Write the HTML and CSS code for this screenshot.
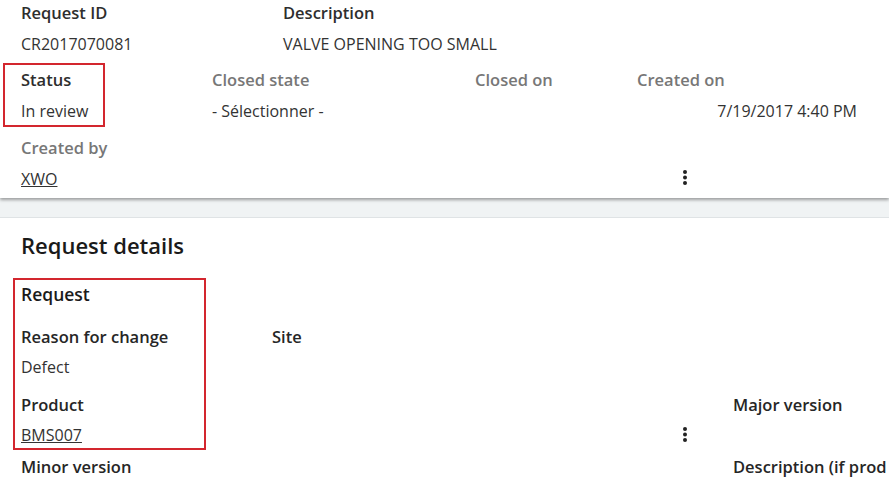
FILE: index.html
```html
<!DOCTYPE html>
<html lang="en">
<head>
    <meta charset="UTF-8">
    <meta name="viewport" content="width=device-width, initial-scale=1.0">
    <title>Change request</title>
    <link rel="stylesheet" href="styles.css">
</head>
<body>
<div class="page">

    <!-- En-tête de la demande -->
    <div class="summary">
        <div class="row row-top">
            <div class="field">
                <div class="label">Request ID</div>
                <div class="value">CR2017070081</div>
            </div>
            <div class="field">
                <div class="label">Description</div>
                <div class="value">VALVE OPENING TOO SMALL</div>
            </div>
        </div>

        <div class="row row-status">
            <div class="field">
                <div class="label">Status</div>
                <div class="value">In review</div>
            </div>
            <div class="field">
                <div class="label muted">Closed state</div>
                <div class="value">- Sélectionner -</div>
            </div>
            <div class="field">
                <div class="label muted">Closed on</div>
                <div class="value"></div>
            </div>
            <div class="field">
                <div class="label muted">Created on</div>
                <div class="value right">7/19/2017 4:40 PM</div>
            </div>
        </div>

        <div class="row row-created">
            <div class="field">
                <div class="label muted">Created by</div>
                <div class="value"><a href="#">XWO</a></div>
            </div>
            <div class="kebab">
                <svg width="4" height="15" viewBox="0 0 4 15"><circle cx="2" cy="2" r="2"/><circle cx="2" cy="7.5" r="2"/><circle cx="2" cy="13" r="2"/></svg>
            </div>
        </div>

        <div class="highlight hl-status"></div>
    </div>

    <div class="band"></div>

    <!-- Détails -->
    <div class="details">
        <h2>Request details</h2>
        <h3>Request</h3>

        <div class="row row-reason">
            <div class="field">
                <div class="label dark">Reason for change</div>
                <div class="value">Defect</div>
            </div>
            <div class="field">
                <div class="label dark">Site</div>
                <div class="value"></div>
            </div>
        </div>

        <div class="row row-product">
            <div class="field">
                <div class="label dark">Product</div>
                <div class="value"><a href="#">BMS007</a></div>
            </div>
            <div class="kebab">
                <svg width="4" height="15" viewBox="0 0 4 15"><circle cx="2" cy="2" r="2"/><circle cx="2" cy="7.5" r="2"/><circle cx="2" cy="13" r="2"/></svg>
            </div>
            <div class="field">
                <div class="label dark">Major version</div>
            </div>
        </div>

        <div class="row row-minor">
            <div class="label dark">Minor version</div>
            <div class="label dark clip">Description (if prod</div>
        </div>

        <div class="highlight hl-request"></div>
    </div>

</div>
</body>
</html>
```

FILE: styles.css
```css
body {
    margin: 0;
    background: #fff;
    font-family: "Open Sans", Arial, sans-serif;
    color: #333;
}
.page {
    width: 889px;
    height: 501px;
    overflow: hidden;
}
.summary {
    position: relative;
    z-index: 1;
    background: #fff;
    padding: 2px 0 8px 21px;
    box-shadow: 0 2px 3px rgba(0, 0, 0, 0.35);
}
.row {
    display: grid;
    white-space: nowrap;
}
.row-top {
    grid-template-columns: 262px 1fr;
}
.row-status {
    margin-top: 14px;
    grid-template-columns: 191px 263px 162px 220px;
}
.row-created {
    margin-top: 15px;
    grid-template-columns: 662px auto;
}
.label {
    font-size: 16.5px;
    font-weight: 600;
    line-height: 22px;
    color: #2e2e2e;
}
.label.muted {
    color: #777;
}
.label.dark {
    color: #262626;
}
.value {
    margin-top: 9px;
    font-size: 16px;
    line-height: 22px;
    min-height: 22px;
    color: #333;
}
.value.right {
    text-align: right;
}
.value a {
    color: #333;
    text-decoration: underline;
}
.kebab {
    align-self: end;
    padding-bottom: 5px;
    line-height: 0;
}
.kebab svg {
    fill: #222;
}
.band {
    height: 19px;
    background: #f0f3f4;
    border-bottom: 1px solid #dfe3e5;
}
.details {
    position: relative;
    padding: 13px 0 0 21px;
}
h2 {
    margin: 0;
    font-size: 22px;
    font-weight: 600;
    line-height: 28px;
    color: #1a1a1a;
}
h3 {
    margin: 24px 0 0;
    font-size: 17.5px;
    font-weight: 600;
    line-height: 22px;
    color: #1a1a1a;
}
.row-reason {
    margin-top: 21px;
    grid-template-columns: 251px 1fr;
}
.row-reason .value {
    margin-top: 8px;
}
.row-product {
    margin-top: 16px;
    grid-template-columns: 662px 50px 1fr;
}
.row-product .value {
    margin-top: 8px;
}
.row-product .kebab {
    padding-bottom: 4px;
}
.row-minor {
    margin-top: 10px;
    grid-template-columns: 712px 1fr;
}
.clip {
    overflow: hidden;
}
.highlight {
    position: absolute;
    border: 2px solid #d3262e;
    box-sizing: border-box;
}
.hl-status {
    left: 3px;
    top: 63px;
    width: 102px;
    height: 64px;
}
.hl-request {
    left: 13px;
    top: 60px;
    width: 193px;
    height: 172px;
}
```
